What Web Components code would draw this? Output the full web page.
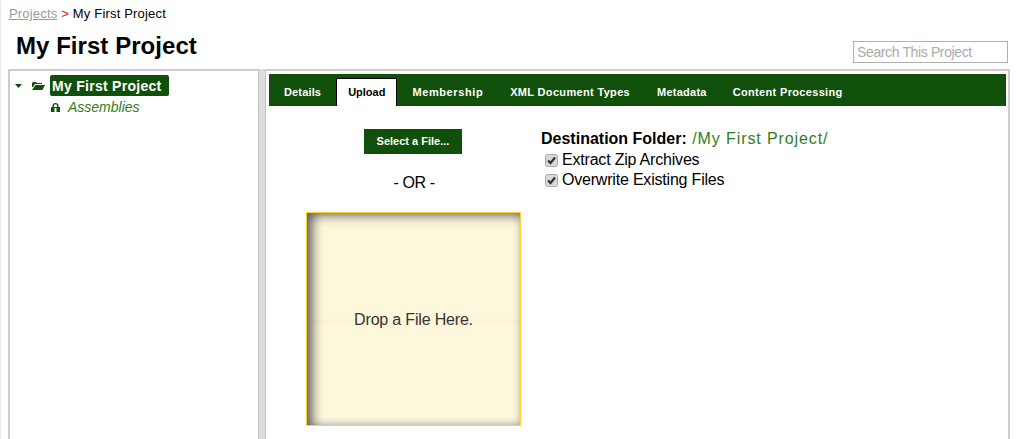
<!DOCTYPE html>
<html>
<head>
<meta charset="utf-8">
<title>My First Project</title>
<style>
    html, body { margin: 0; padding: 0; height: 100%; overflow: hidden; background: #fff; }
    body { font-family: "Liberation Sans", Arial, sans-serif; color: #000; }
</style>
</head>
<body>
<project-page></project-page>

<script>
const GREEN = '#11500a';

class ProjectHeader extends HTMLElement {
    constructor() {
        super();
        this.attachShadow({ mode: "open" });
    }

    connectedCallback() {
        this.shadowRoot.innerHTML = /* html */ `
            <style>
                :host { display: block; height: 69px; box-sizing: border-box; padding: 6px 8px 0 8px; }
                .crumbs { font-size: 13px; letter-spacing: .18px; line-height: 15px; color: #000; }
                .crumbs a { color: #999; text-decoration: underline; }
                .crumbs b { font-weight: normal; color: #d0103a; }
                .row { display: flex; align-items: flex-end; justify-content: space-between; margin-top: 11px; }
                h1 { margin: 0 0 0 7px; font-size: 24px; letter-spacing: .05px; line-height: 28px; font-weight: bold; }
                input {
                    width: 155px; height: 22px; box-sizing: border-box; margin: 0 1px -3px 0;
                    border: 1px solid #b0b0b0; padding: 0 3px; outline: none;
                    font: 14px "Liberation Sans", Arial, sans-serif; letter-spacing: -.37px;
                }
                input::placeholder { color: #aaa; opacity: 1; }
            </style>
            <div class="crumbs"><a>Projects</a> <b>&gt;</b> My First Project</div>
            <div class="row">
                <h1>My First Project</h1>
                <input type="text" placeholder="Search This Project">
            </div>
        `;
    }
}

class ProjectTree extends HTMLElement {
    constructor() {
        super();
        this.attachShadow({ mode: "open" });
    }

    connectedCallback() {
        this.shadowRoot.innerHTML = /* html */ `
            <style>
                :host { display: block; width: 250px; box-sizing: border-box; border: 2px solid #ccc; border-width: 2px 0 0 2px; padding: 4px 0 0 5px; background: #fff; }
                .node { display: flex; align-items: center; }
                .arrow { width: 7px; height: 4px; margin-right: 10px; }
                .folder { width: 13px; height: 8px; margin-right: 5px; }
                .selected {
                    background: ${GREEN}; color: #fff; font-size: 14px; font-weight: bold; letter-spacing: .28px;
                    line-height: 20px; padding: 1px 7px 0 2px; border-radius: 2px;
                }
                .child { padding-left: 36px; margin-top: 1px; height: 20px; }
                .lock { width: 9px; height: 9px; margin-right: 8px; }
                em { font-size: 14px; color: #2f7d22; }
            </style>
            <div class="node">
                <svg class="arrow" viewBox="0 0 7 4"><path d="M0 0h7L3.5 4z" fill="${GREEN}"/></svg>
                <svg class="folder" viewBox="0 0 13 8"><path d="M0 1 1 0h3l1 1h5v1H3L1 5H0z" fill="${GREEN}"/><path d="M3.5 3H13l-2.5 5H0z" fill="${GREEN}"/></svg>
                <span class="selected">My First Project</span>
            </div>
            <div class="node child">
                <svg class="lock" viewBox="0 0 9 9"><path d="M1.500 4V2.500Q1.500 0 4.500 0T7.500 2.500V4H9v5H5.500V5h-2v4H0V4zM3 4h3V2.500Q6 1.200 4.500 1.200T3 2.500z" fill="${GREEN}" fill-rule="evenodd"/></svg>
                <em>Assemblies</em>
            </div>
        `;
    }
}

class TabBar extends HTMLElement {
    constructor() {
        super();
        this.attachShadow({ mode: "open" });
    }

    connectedCallback() {
        const tabs = [
            ['Details', .15],
            ['Upload', 0],
            ['Membership', .6],
            ['XML Document Types', .33],
            ['Metadata', .25],
            ['Content Processing', .33],
        ];
        const active = this.getAttribute('active');
        const items = tabs.map(([t, sp]) =>
            `<span class="tab${t === active ? ' on' : ''}" style="letter-spacing:${sp}px">${t}</span>`).join('');
        this.shadowRoot.innerHTML = /* html */ `
            <style>
                :host { display: flex; align-items: flex-end; height: 32px; box-sizing: border-box; background: ${GREEN}; padding-left: 2px; }
                .tab {
                    display: block; height: 28px; box-sizing: border-box; padding: 0 13px;
                    font-size: 11px; font-weight: bold; line-height: 28px; color: #fff;
                }
                .tab:nth-child(4), .tab:nth-child(5) { margin-right: 1px; }
                .on { background: #fff; color: #000; border: 1px solid #000; border-bottom: 0; padding: 0 11px; margin: 0 2px; line-height: 26px; }
            </style>
            ${items}
        `;
    }
}

class DropZone extends HTMLElement {
    constructor() {
        super();
        this.attachShadow({ mode: "open" });
    }

    connectedCallback() {
        this.shadowRoot.innerHTML = /* html */ `
            <style>
                :host {
                    display: flex; align-items: center; justify-content: center;
                    width: 215px; height: 214px; box-sizing: border-box; padding-top: 1px;
                    border: 1px solid #ffd42a; color: #333; font-size: 16px; letter-spacing: -.18px;
                    background: linear-gradient(#fdf8dc 50%, #faf2d2 50.5%, #fdf8dc 53%);
                    box-shadow: inset 7px 4px 12px -2px #555, inset -3px -3px 8px -3px #bbb;
                }
            </style>
            <slot></slot>
        `;
    }
}

class CheckOption extends HTMLElement {
    constructor() {
        super();
        this.attachShadow({ mode: "open" });
    }

    connectedCallback() {
        this.shadowRoot.innerHTML = /* html */ `
            <style>
                :host { display: flex; align-items: center; height: 20px; font-size: 16px; letter-spacing: -.2px; }
                svg { width: 13px; height: 13px; margin: 0 4px 0 4px; }
            </style>
            <svg viewBox="0 0 13 13">
                <rect x=".5" y=".5" width="12" height="12" rx="2" fill="#d8d8d8" stroke="#aaa"/>
                <path d="M3 6.500l2.500 2.500L10 3.500" fill="none" stroke="#333" stroke-width="2.200"/>
            </svg>
            <slot></slot>
        `;
    }
}

class UploadPanel extends HTMLElement {
    constructor() {
        super();
        this.attachShadow({ mode: "open" });
    }

    connectedCallback() {
        this.shadowRoot.innerHTML = /* html */ `
            <style>
                :host { display: flex; padding: 23px 0 0 37px; }
                .left { display: flex; flex-direction: column; align-items: center; width: 215px; }
                button {
                    width: 98px; height: 25px; border: 0; padding: 0 0 2px; margin-left: -1px; background: ${GREEN}; color: #fff;
                    font: bold 11px "Liberation Sans", Arial, sans-serif;
                }
                .or { font-size: 16px; letter-spacing: -.4px; line-height: 18px; margin: 20px 0 20px 1px; }
                .right { margin-left: 20px; }
                .dest { font-size: 16px; font-weight: bold; line-height: 20px; margin-bottom: 1px; }
                .dest span { font-weight: normal; color: #2f7d22; letter-spacing: .9px; margin-left: 1px; }
            </style>
            <div class="left">
                <button>Select a File...</button>
                <div class="or">- OR -</div>
                <drop-zone>Drop a File Here.</drop-zone>
            </div>
            <div class="right">
                <div class="dest">Destination Folder: <span>/My First Project/</span></div>
                <check-option>Extract Zip Archives</check-option>
                <check-option>Overwrite Existing Files</check-option>
            </div>
        `;
    }
}

class ProjectPage extends HTMLElement {
    constructor() {
        super();
        this.attachShadow({ mode: "open" });
    }

    connectedCallback() {
        this.shadowRoot.innerHTML = /* html */ `
            <style>
                :host { display: flex; flex-direction: column; height: 100vh; box-sizing: border-box; border-left: 1px solid #e8e8e8; }
                .work { flex: 1; display: flex; padding: 0 7px 0 7px; min-height: 0; }
                .split { width: 8px; box-sizing: border-box; background: #ddd; border: solid #c4c4c4; border-width: 0 1px; }
                .main { flex: 1; box-sizing: border-box; border: 2px solid #ccc; border-left: 0; border-bottom: 0; padding: 3px 2px 0 3px; }
                project-tree { flex: none; }
            </style>
            <project-header></project-header>
            <div class="work">
                <project-tree></project-tree>
                <div class="split"></div>
                <div class="main">
                    <tab-bar active="Upload"></tab-bar>
                    <upload-panel></upload-panel>
                </div>
            </div>
        `;
    }
}

customElements.define('project-header', ProjectHeader);
customElements.define('project-tree', ProjectTree);
customElements.define('tab-bar', TabBar);
customElements.define('drop-zone', DropZone);
customElements.define('check-option', CheckOption);
customElements.define('upload-panel', UploadPanel);
customElements.define('project-page', ProjectPage);
</script>
</body>
</html>
